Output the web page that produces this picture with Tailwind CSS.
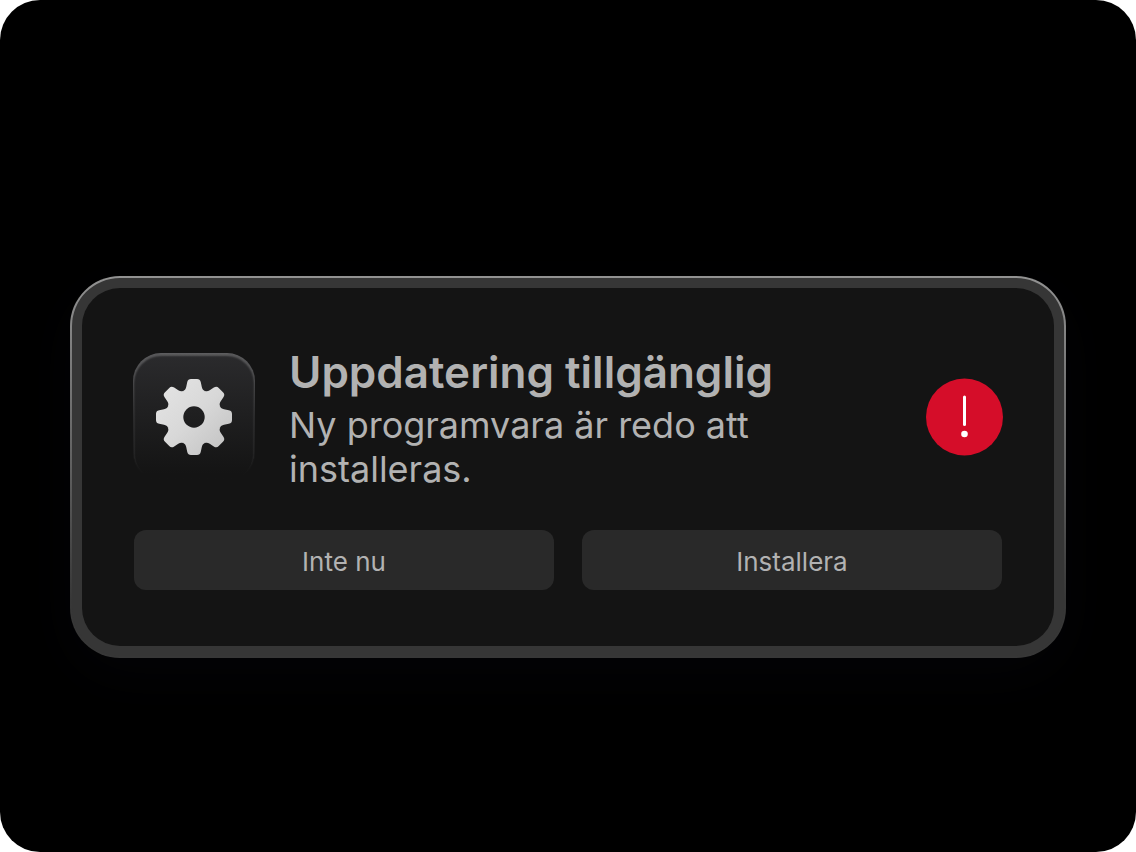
<!DOCTYPE html>
<html lang="sv">
<head>
<meta charset="utf-8">
<meta name="viewport" content="width=device-width, initial-scale=1">
<title>Uppdatering tillgänglig</title>
<script src="https://cdn.jsdelivr.net/npm/@tailwindcss/browser@4"></script>
</head>
<body class="bg-white font-['Inter',sans-serif]">
<main class="flex min-h-screen items-center rounded-[40px] bg-black px-[70px] pt-[82px]">
  <section role="alertdialog" aria-labelledby="title" aria-describedby="message" class="w-full rounded-[50px] bg-linear-to-b from-[#929292] via-[#606060] via-50% to-[#373737] to-85% p-0.5 shadow-[0_16px_60px_#040407]">
    <div class="rounded-[48px] bg-[#363636] p-2.5">
      <div class="rounded-[38px] bg-[#141414] px-[51px] pt-[65px] pb-14">
        <div class="flex items-start">
          <div class="h-32 w-[122px] shrink-0 rounded-[28px] bg-linear-to-b from-[#5d5d5f] via-[#2a2a2b] via-50% to-[#141414] to-95% p-px">
            <div class="flex size-full items-center justify-center rounded-[27px] bg-linear-to-b from-[#2b2b2d] to-[#141414] to-95% shadow-[inset_0_2px_2px_#ffffff38]">
              <svg class="size-20 shrink-0" viewBox="-40 -40 80 80" aria-hidden="true">
                <defs>
                  <linearGradient id="metal" x1="0" y1="0" x2="1" y2="1">
                    <stop offset="0.15" stop-color="#e2e2e2"/>
                    <stop offset="0.5" stop-color="#d8d8d8"/>
                    <stop offset="0.85" stop-color="#c6c6c6"/>
                  </linearGradient>
                  <path id="tooth" d="M0 0L-10.8 -26C-9.1 -26.7 -8.2 -28 -7.8 -30L-6.8 -34.8C-6.3 -37.3 -5 -38 -3 -38H3C5 -38 6.3 -37.3 6.8 -34.8L7.8 -30C8.2 -28 9.1 -26.7 10.8 -26Z"/>
                  <mask id="gear" maskUnits="userSpaceOnUse" x="-40" y="-40" width="80" height="80">
                    <g fill="#fff">
                      <circle r="27.8"/>
                      <use href="#tooth"/>
                      <use href="#tooth" transform="rotate(45)"/>
                      <use href="#tooth" transform="rotate(90)"/>
                      <use href="#tooth" transform="rotate(135)"/>
                      <use href="#tooth" transform="rotate(180)"/>
                      <use href="#tooth" transform="rotate(225)"/>
                      <use href="#tooth" transform="rotate(270)"/>
                      <use href="#tooth" transform="rotate(315)"/>
                    </g>
                    <circle r="10.7" fill="#000"/>
                  </mask>
                </defs>
                <rect x="-40" y="-40" width="80" height="80" fill="url(#metal)" mask="url(#gear)"/>
              </svg>
            </div>
          </div>
          <div class="-mt-[7px] ml-[34px] min-w-0 flex-1 text-[#b2b2b2]">
            <h1 id="title" class="text-[44px] leading-[52px] font-semibold">Uppdatering tillgänglig</h1>
            <p id="message" class="mt-[5px] max-w-[520px] text-[36px] leading-11">Ny programvara är redo att installeras.</p>
          </div>
          <svg class="mt-[25px] size-[78px] shrink-0" viewBox="0 0 78 78" role="img" aria-label="Varning">
            <circle cx="39.5" cy="39" r="38.5" fill="#d50d29"/>
            <path d="M39.5 19V46.5" stroke="#fff" stroke-width="3" stroke-linecap="round"/>
            <circle cx="39.5" cy="56" r="3.3" fill="#fff"/>
          </svg>
        </div>
        <div class="mx-px mt-[39px] grid grid-cols-2 gap-7 text-[26px] text-[#b2b2b2]">
          <button type="button" class="h-15 rounded-xl bg-[#292929] pt-0.5">Inte nu</button>
          <button type="button" class="h-15 rounded-xl bg-[#292929] pt-0.5">Installera</button>
        </div>
      </div>
    </div>
  </section>
</main>
</body>
</html>
